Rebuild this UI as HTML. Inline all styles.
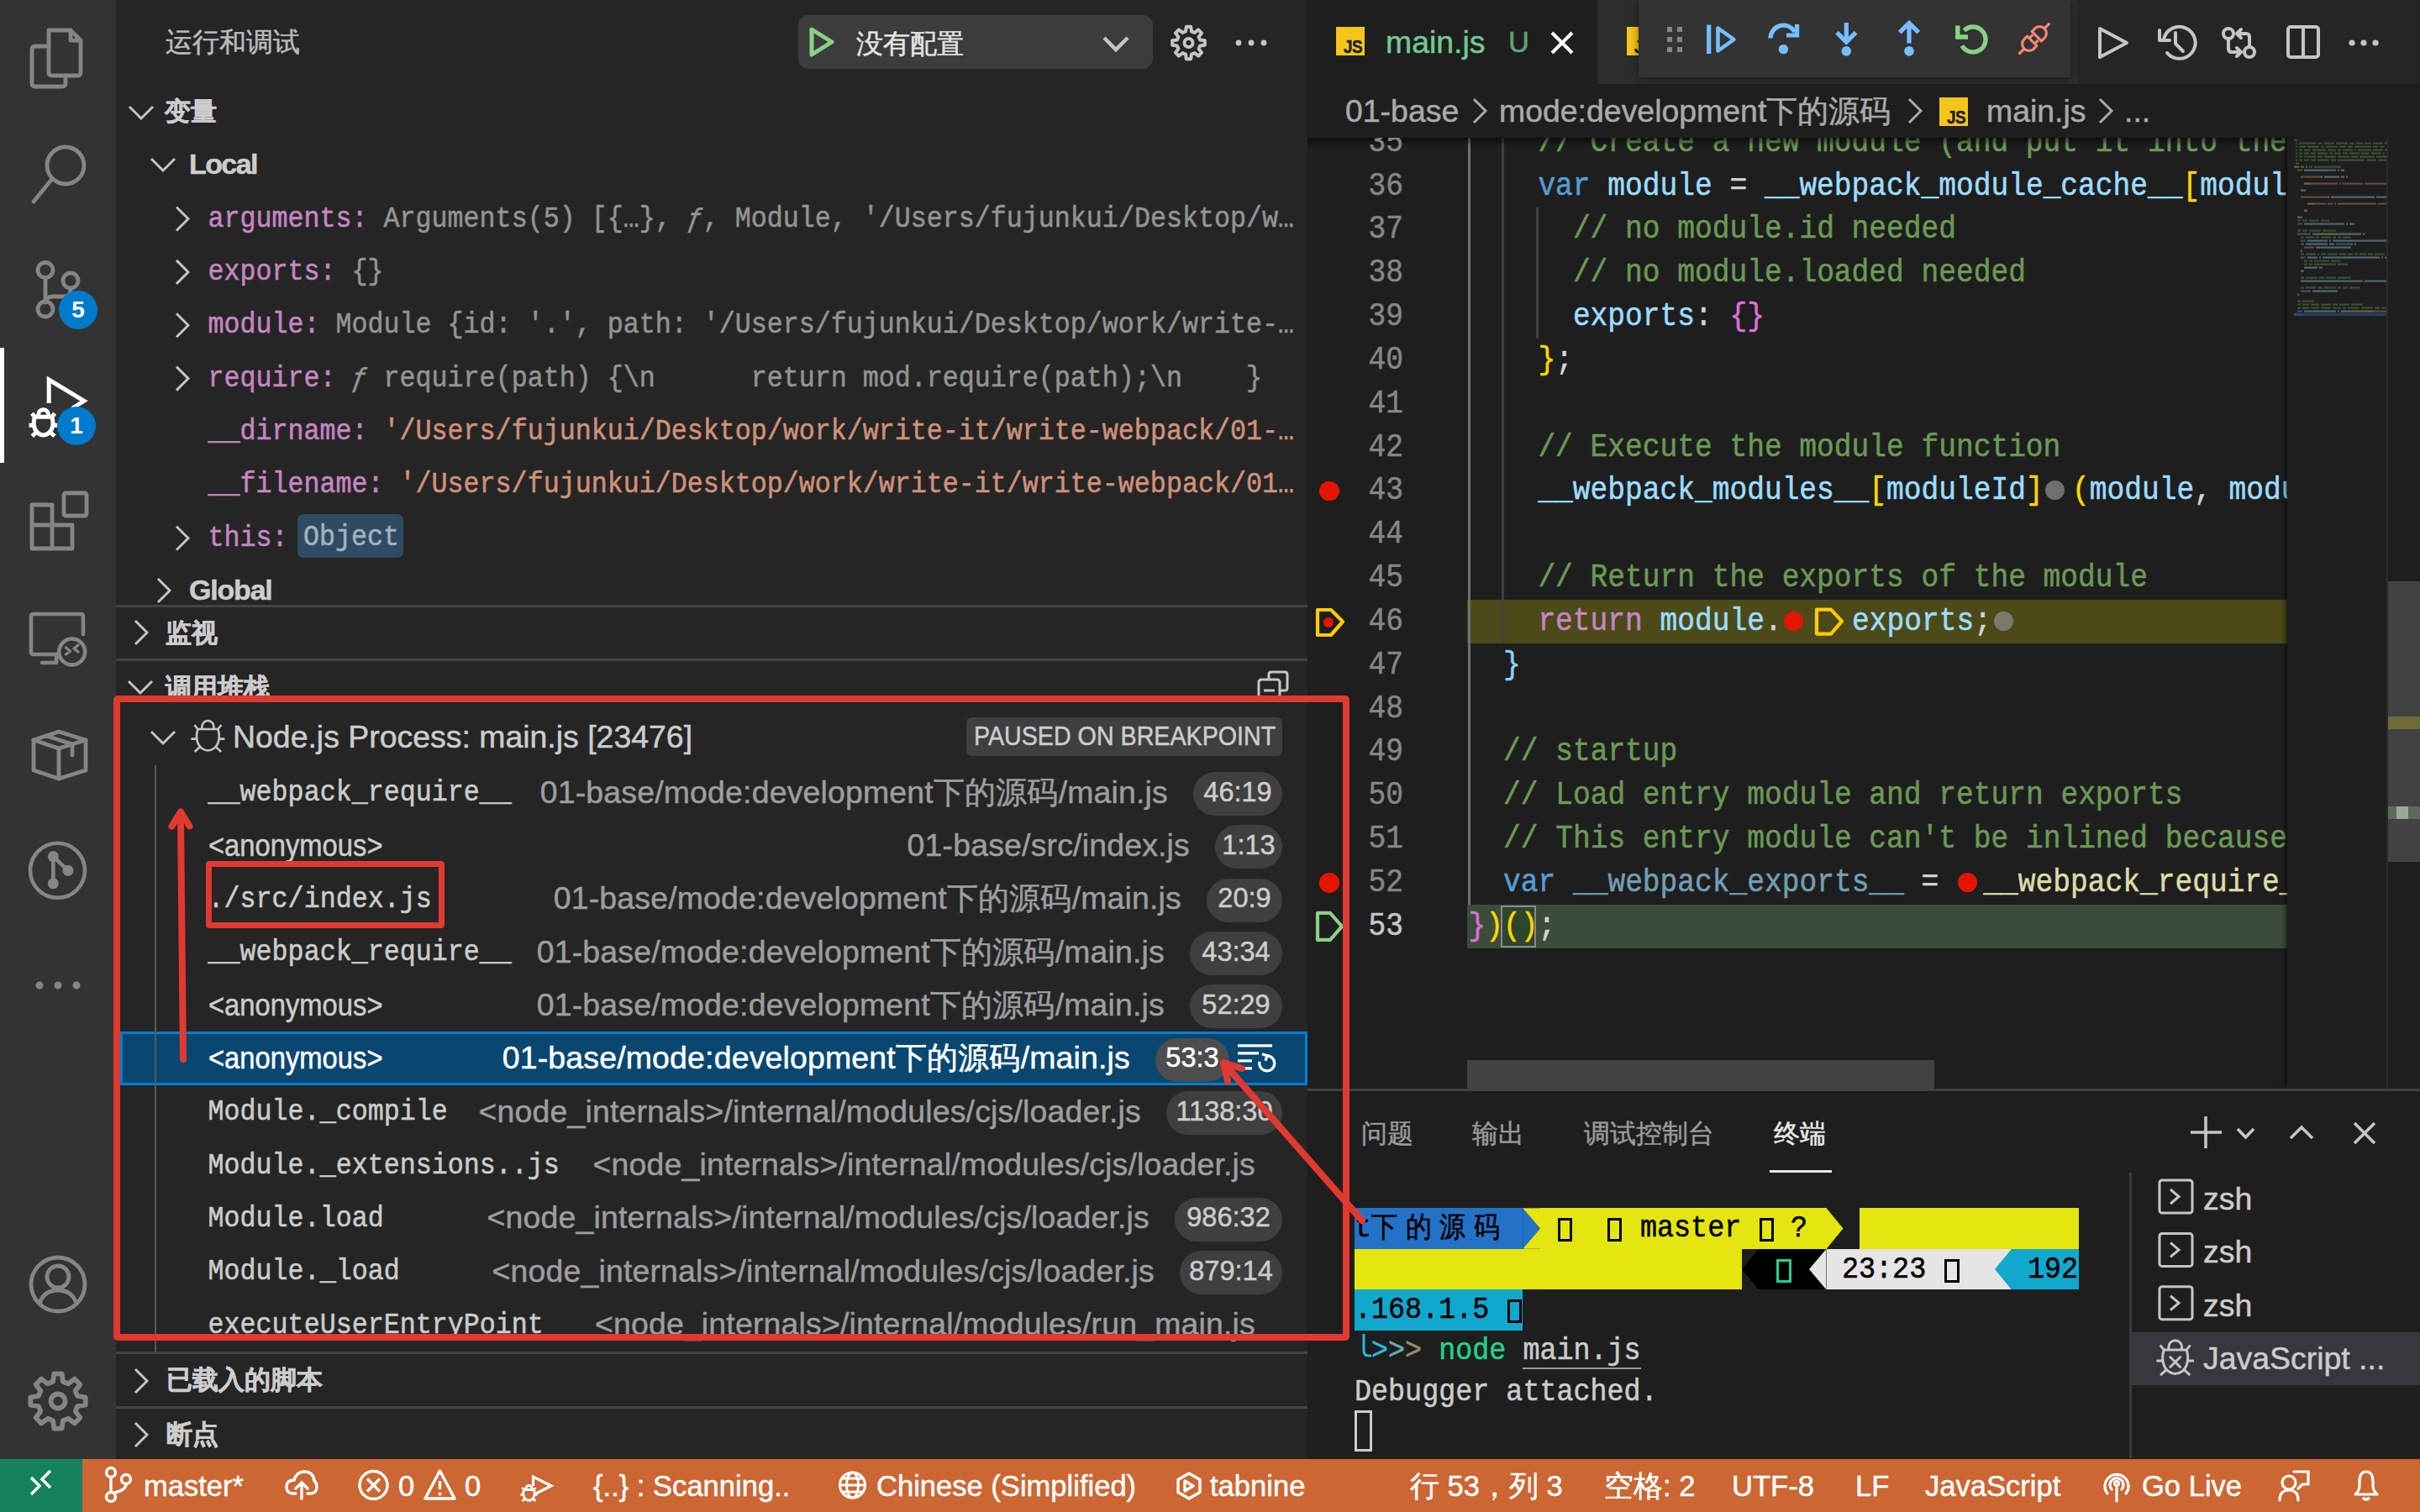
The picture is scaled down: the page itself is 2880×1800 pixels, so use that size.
<!DOCTYPE html><html><head><meta charset="utf-8"><title>VS Code</title><style>
*{box-sizing:border-box;margin:0;padding:0}
html,body{width:2880px;height:1800px;overflow:hidden;background:#1e1e1e}
body{position:relative;font-family:"Liberation Sans",sans-serif;color:#cccccc}
.t{-webkit-text-stroke:0.5px currentColor}
.mono{transform:scaleY(1.1)}
.a{position:absolute}
.t{position:absolute;white-space:pre}
.mono{font-family:"Liberation Mono",monospace}
svg{position:absolute;overflow:visible}
.ic{fill:none;stroke-linecap:round;stroke-linejoin:round}
</style></head><body>
<div class="a" style="left:0;top:0;width:138px;height:1737px;background:#333333"></div>
<div class="a" style="left:0;top:414px;width:5px;height:137px;background:#ffffff"></div>
<svg style="left:0;top:0" width="138" height="138"><g class="ic" stroke="#858585" stroke-width="4.8"><path d="M58 36 H84 L96 48 V86 Q96 90 92 90 H62 Q58 90 58 86 Z"/><path d="M84 36 V48 H96"/><path d="M58 55 H42 Q38 55 38 59 V99 Q38 103 42 103 H74 Q78 103 78 99 V90"/></g></svg>
<svg style="left:0;top:138" width="138" height="138"><g class="ic" stroke="#858585" stroke-width="4.8"><circle cx="78" cy="59" r="22"/><path d="M62 75 L40 102"/></g></svg>
<svg style="left:0;top:276" width="138" height="138"><g class="ic" stroke="#858585" stroke-width="4.8"><circle cx="54" cy="45.5" r="9"/><circle cx="84" cy="58" r="9"/><circle cx="54" cy="92" r="9"/><path d="M54 54.5 V83"/><path d="M84 67 V69 Q84 77 76 77 H63 Q55 77 54 84"/></g></svg>
<div class="a" style="left:70px;top:346px;width:46px;height:46px;border-radius:50%;background:#007acc;color:#fff;font:bold 28px/46px 'Liberation Sans';text-align:center">5</div>
<svg style="left:0;top:0" width="1" height="1"><path d="M58.2 480 V452 L100 477.3 L86 486" fill="none" stroke="#ffffff" stroke-width="5" stroke-linejoin="miter"/></svg>
<svg style="left:0;top:0" width="1" height="1"><path transform="translate(51.6 504) scale(0.85)" d="M-7 -9 V-12 A7 7 0 0 1 7 -12 V-9 M-12 -9 H12 M-12 -9 C-15 0 -13 10 -7 14 Q0 19 7 14 C13 10 15 0 12 -9 M-16 -14 L-12 -9 M16 -14 L12 -9 M-20 2.6 H-13.5 M20 2.6 H13.5 M-15.7 18 L-10 12.6 M15.7 18 L10 12.6" fill="none" stroke="#ffffff" stroke-width="5.88" stroke-linecap="butt" stroke-linejoin="round"/></svg>
<div class="a" style="left:68px;top:484px;width:46px;height:46px;border-radius:50%;background:#007acc;color:#fff;font:bold 28px/46px 'Liberation Sans';text-align:center">1</div>
<svg style="left:0;top:553" width="138" height="138"><g class="ic" stroke="#858585" stroke-width="4.8"><path d="M38 48 H62 V72 H86 V100 H38 Z"/><path d="M38 72 H62 V100"/><rect x="76" y="34" width="27" height="27" rx="2"/></g></svg>
<svg style="left:0;top:691" width="138" height="138"><g class="ic" stroke="#858585" stroke-width="4.6"><path d="M68 88 H40 Q37 88 37 85 V43 Q37 40 40 40 H96 Q99 40 99 43 V64"/><path d="M50 98 H67 V89"/><circle cx="85.7" cy="85" r="15.5"/><path d="M78.5 80 L83.5 84 L78.5 88 M93 77 L88 81 L93 85" stroke-width="3.4"/></g></svg>
<svg style="left:0;top:829" width="138" height="138"><g class="ic" stroke="#858585" stroke-width="4.8"><path d="M40 52 L70 42 L102 52 V88 L70 98 L40 88 Z"/><path d="M40 52 L70 62 L102 52"/><path d="M70 62 V98"/><path d="M55 47 L86 57 V70"/></g></svg>
<svg style="left:0;top:968" width="138" height="138"><circle cx="68.5" cy="68.3" r="32.5" fill="none" stroke="#858585" stroke-width="4.6"/><g fill="#858585"><circle cx="63.3" cy="51.6" r="6.5"/><circle cx="81" cy="68.3" r="6.5"/><circle cx="63.3" cy="83.8" r="6.5"/></g><path d="M63.3 51.6 V83.8 M63.3 51.6 L81 68.3" stroke="#858585" stroke-width="4.6" fill="none"/></svg>
<svg style="left:0;top:1106" width="138" height="138"><g fill="#858585"><circle cx="47" cy="67" r="4.5"/><circle cx="69" cy="67" r="4.5"/><circle cx="91" cy="67" r="4.5"/></g></svg>
<svg style="left:0;top:1460" width="138" height="138"><g class="ic" stroke="#858585" stroke-width="4.8"><circle cx="69" cy="69" r="32"/><circle cx="69" cy="60" r="13"/><path d="M47 92 Q52 76 69 76 Q86 76 91 92"/></g></svg>
<svg style="left:0;top:0" width="138" height="1800"><path d="M101.7 1663.4 L101.7 1672.6 L92.2 1674.0 L89.7 1680.2 L95.4 1687.8 L88.8 1694.4 L81.2 1688.7 L75.0 1691.2 L73.6 1700.7 L64.4 1700.7 L63.0 1691.2 L56.8 1688.7 L49.2 1694.4 L42.6 1687.8 L48.3 1680.2 L45.8 1674.0 L36.3 1672.6 L36.3 1663.4 L45.8 1662.0 L48.3 1655.8 L42.6 1648.2 L49.2 1641.6 L56.8 1647.3 L63.0 1644.8 L64.4 1635.3 L73.6 1635.3 L75.0 1644.8 L81.2 1647.3 L88.8 1641.6 L95.4 1648.2 L89.7 1655.8 L92.2 1662.0 Z" stroke="#858585" stroke-width="5.8" fill="none" stroke-linejoin="round"/><circle cx="69" cy="1668" r="8.5" stroke="#858585" stroke-width="5.8" fill="none"/></svg>
<div class="a" style="left:138px;top:0;width:1418px;height:1737px;background:#252526"></div>
<div class="t" style="left:197px;top:20px;height:60px;font-size:31.68px;line-height:60px;color:#bbbbbb">运行和调试</div>
<div class="a" style="left:950px;top:18px;width:422px;height:64px;border-radius:12px;background:#3c3c3c"></div>
<svg style="left:0;top:0" width="1" height="1"><path d="M966 35 L990 50 L966 65 Z" fill="none" stroke="#89d185" stroke-width="5" stroke-linejoin="round"/></svg>
<div class="t" style="left:1019px;top:20px;height:64px;font-size:31.5px;line-height:64px;color:#e4e4e4">没有配置</div>
<svg style="left:0;top:0" width="1" height="1"><path d="M1314 45 L1328 59 L1342 45" fill="none" stroke="#c5c5c5" stroke-width="4.5"/></svg>
<svg style="left:0;top:0" width="1" height="1"><path d="M1433.8 48.3 L1433.8 53.7 L1428.1 54.5 L1426.6 58.1 L1430.1 62.7 L1426.2 66.6 L1421.6 63.1 L1418.0 64.6 L1417.2 70.3 L1411.8 70.3 L1411.0 64.6 L1407.4 63.1 L1402.8 66.6 L1398.9 62.7 L1402.4 58.1 L1400.9 54.5 L1395.2 53.7 L1395.2 48.3 L1400.9 47.5 L1402.4 43.9 L1398.9 39.3 L1402.8 35.4 L1407.4 38.9 L1411.0 37.4 L1411.8 31.7 L1417.2 31.7 L1418.0 37.4 L1421.6 38.9 L1426.2 35.4 L1430.1 39.3 L1426.6 43.9 L1428.1 47.5 Z" stroke="#c5c5c5" stroke-width="4" fill="none" stroke-linejoin="round"/><circle cx="1414.5" cy="51" r="5" stroke="#c5c5c5" stroke-width="4" fill="none"/></svg>
<svg style="left:0;top:0" width="1" height="1"><g fill="#c5c5c5"><circle cx="1474" cy="51" r="3.4"/><circle cx="1489" cy="51" r="3.4"/><circle cx="1504" cy="51" r="3.4"/></g></svg>
<svg style="left:0;top:0" width="1" height="1"><path d="M154 127 L168 141 L182 127" fill="none" stroke="#c5c5c5" stroke-width="2.9"/></svg>
<div class="t" style="left:196px;top:101px;height:63px;font-weight:bold;font-size:30.5px;line-height:63px;color:#cccccc">变量</div>
<svg style="left:0;top:0" width="1" height="1"><path d="M180 189 L194 203 L208 189" fill="none" stroke="#c5c5c5" stroke-width="2.9"/></svg>
<div class="t" style="left:225px;top:164px;height:63px;font-weight:bold;font-size:34px;line-height:63px;letter-spacing:-1.6px;color:#cccccc">Local</div>
<svg style="left:0;top:0" width="1" height="1"><path d="M210 246.52 L224 260.52 L210 274.52" fill="none" stroke="#c5c5c5" stroke-width="2.9"/></svg>
<div class="t mono" style="left:247.5px;top:229.5px;height:63px;font-size:31.68px;line-height:63px;color:#c586c0">arguments: <span style="color:#939393">Arguments(5) [{…}, </span><span style="color:#939393;font-style:italic">ƒ</span><span style="color:#939393">, Module, '/Users/fujunkui/Desktop/w…</span></div>
<svg style="left:0;top:0" width="1" height="1"><path d="M210 309.88 L224 323.88 L210 337.88" fill="none" stroke="#c5c5c5" stroke-width="2.9"/></svg>
<div class="t mono" style="left:247.5px;top:292.9px;height:63px;font-size:31.68px;line-height:63px;color:#c586c0">exports: <span style="color:#939393">{}</span></div>
<svg style="left:0;top:0" width="1" height="1"><path d="M210 373.24 L224 387.24 L210 401.24" fill="none" stroke="#c5c5c5" stroke-width="2.9"/></svg>
<div class="t mono" style="left:247.5px;top:356.2px;height:63px;font-size:31.68px;line-height:63px;color:#c586c0">module: <span style="color:#939393">Module {id: '.', path: '/Users/fujunkui/Desktop/work/write-…</span></div>
<svg style="left:0;top:0" width="1" height="1"><path d="M210 436.6 L224 450.6 L210 464.6" fill="none" stroke="#c5c5c5" stroke-width="2.9"/></svg>
<div class="t mono" style="left:247.5px;top:419.6px;height:63px;font-size:31.68px;line-height:63px;color:#c586c0">require: <span style="color:#939393;font-style:italic">ƒ</span><span style="color:#939393"> require(path) {\n      return mod.require(path);\n    }</span></div>
<div class="t mono" style="left:247.5px;top:483.0px;height:63px;font-size:31.68px;line-height:63px;color:#c586c0">__dirname: <span style="color:#ce9178">'/Users/fujunkui/Desktop/work/write-it/write-webpack/01-…</span></div>
<div class="t mono" style="left:247.5px;top:546.3px;height:63px;font-size:31.68px;line-height:63px;color:#c586c0">__filename: <span style="color:#ce9178">'/Users/fujunkui/Desktop/work/write-it/write-webpack/01…</span></div>
<svg style="left:0;top:0" width="1" height="1"><path d="M210 626.6800000000001 L224 640.6800000000001 L210 654.6800000000001" fill="none" stroke="#c5c5c5" stroke-width="2.9"/></svg>
<div class="t mono" style="left:247.5px;top:609.7px;height:63px;font-size:31.68px;line-height:63px;color:#c586c0">this: </div>
<div class="a" style="left:354px;top:612px;width:126px;height:52px;border-radius:7px;background:#2f4b62"></div>
<div class="t mono" style="left:361px;top:609px;height:63px;font-size:31.68px;line-height:63px;color:#a3b2c0">Object</div>
<div class="a" style="left:138px;top:671px;width:1418px;height:50px;overflow:hidden">
<svg style="left:0;top:0" width="1" height="1"><path d="M50 18 L64 32 L50 46" fill="none" stroke="#c5c5c5" stroke-width="2.9"/></svg>
<div class="t" style="left:87px;top:0;height:63px;font-weight:bold;font-size:34px;line-height:63px;letter-spacing:-1.2px;color:#cccccc">Global</div>
</div>
<div class="a" style="left:138px;top:720px;width:1418px;height:3px;background:#434344"></div>
<svg style="left:0;top:0" width="1" height="1"><path d="M161 739 L175 753 L161 767" fill="none" stroke="#c5c5c5" stroke-width="2.9"/></svg>
<div class="t" style="left:197px;top:722px;height:63px;font-weight:bold;font-size:30.5px;line-height:63px;color:#cccccc">监视</div>
<div class="a" style="left:138px;top:784px;width:1418px;height:3px;background:#434344"></div>
<div class="a" style="left:138px;top:787px;width:1418px;height:41px;overflow:hidden">
<svg style="left:0;top:0" width="1" height="1"><path d="M15 24 L29 38 L43 24" fill="none" stroke="#c5c5c5" stroke-width="2.9"/></svg>
<div class="t" style="left:59px;top:0;height:63px;font-weight:bold;font-size:30.5px;line-height:63px;color:#cccccc">调用堆栈</div>
<svg style="left:0;top:0" width="1" height="1"><g fill="none" stroke="#c5c5c5" stroke-width="3"><path d="M1372 22 V16 Q1372 13 1375 13 H1391 Q1394 13 1394 16 V32 Q1394 35 1391 35 H1385"/><rect x="1360" y="22" width="25" height="25" rx="3"/><path d="M1366 35 H1379"/></g></svg>
</div>
<svg style="left:0;top:0" width="1" height="1"><path d="M180 871 L194 885 L208 871" fill="none" stroke="#c5c5c5" stroke-width="2.9"/></svg>
<svg style="left:0;top:0" width="1" height="1"><path transform="translate(247.4 877) scale(1.0)" d="M-7 -9 V-12 A7 7 0 0 1 7 -12 V-9 M-12 -9 H12 M-12 -9 C-15 0 -13 10 -7 14 Q0 19 7 14 C13 10 15 0 12 -9 M-16 -14 L-12 -9 M16 -14 L12 -9 M-20 2.6 H-13.5 M20 2.6 H13.5 M-15.7 18 L-10 12.6 M15.7 18 L10 12.6" fill="none" stroke="#c5c5c5" stroke-width="2.60" stroke-linecap="butt" stroke-linejoin="round"/></svg>
<div class="t" style="left:277px;top:846px;height:63px;font-size:37.44px;line-height:63px;color:#cccccc">Node.js Process: main.js [23476]</div>
<div class="a" style="left:1150px;top:854px;width:376px;height:46px;border-radius:6px;background:#3f3f3f"></div>
<div class="t" style="left:1159px;top:854px;height:46px;font-size:30.8px;line-height:46px;color:#cccccc;transform:scaleX(0.93);transform-origin:0 0">PAUSED ON BREAKPOINT</div>
<div class="a" style="left:138px;top:911px;width:1418px;height:699px;overflow:hidden">
<div class="t mono" style="left:109.6px;top:2.0px;height:63px;font-size:31.68px;line-height:63px;color:#cccccc">__webpack_require__</div>
<div class="a" style="left:1282px;top:8.0px;width:106px;height:52px;border-radius:26px;background:#3f3f3f"></div>
<div class="t" style="left:1282px;top:0.5px;width:106px;height:63px;font-size:32.5px;line-height:63px;text-align:center;color:#cccccc">46:19</div>
<div class="t" style="right:166px;top:0.5px;height:63px;font-size:37.44px;line-height:63px;letter-spacing:0.18px;color:#9d9d9d">01-base/mode:development下的源码/main.js</div>
<div class="t" style="left:109.6px;top:63.9px;height:63px;font-size:37.44px;line-height:63px;color:#cccccc;transform:scaleX(0.875);transform-origin:0 0">&lt;anonymous&gt;</div>
<div class="a" style="left:1308px;top:71.4px;width:80px;height:52px;border-radius:26px;background:#3f3f3f"></div>
<div class="t" style="left:1308px;top:63.9px;width:80px;height:63px;font-size:32.5px;line-height:63px;text-align:center;color:#cccccc">1:13</div>
<div class="t" style="right:140px;top:63.9px;height:63px;font-size:37.44px;line-height:63px;letter-spacing:0.18px;color:#9d9d9d">01-base/src/index.js</div>
<div class="t mono" style="left:109.6px;top:128.7px;height:63px;font-size:31.68px;line-height:63px;color:#cccccc">./src/index.js</div>
<div class="a" style="left:1298px;top:134.7px;width:90px;height:52px;border-radius:26px;background:#3f3f3f"></div>
<div class="t" style="left:1298px;top:127.2px;width:90px;height:63px;font-size:32.5px;line-height:63px;text-align:center;color:#cccccc">20:9</div>
<div class="t" style="right:150px;top:127.2px;height:63px;font-size:37.44px;line-height:63px;letter-spacing:0.18px;color:#9d9d9d">01-base/mode:development下的源码/main.js</div>
<div class="t mono" style="left:109.6px;top:192.1px;height:63px;font-size:31.68px;line-height:63px;color:#cccccc">__webpack_require__</div>
<div class="a" style="left:1278px;top:198.1px;width:110px;height:52px;border-radius:26px;background:#3f3f3f"></div>
<div class="t" style="left:1278px;top:190.6px;width:110px;height:63px;font-size:32.5px;line-height:63px;text-align:center;color:#cccccc">43:34</div>
<div class="t" style="right:170px;top:190.6px;height:63px;font-size:37.44px;line-height:63px;letter-spacing:0.18px;color:#9d9d9d">01-base/mode:development下的源码/main.js</div>
<div class="t" style="left:109.6px;top:253.9px;height:63px;font-size:37.44px;line-height:63px;color:#cccccc;transform:scaleX(0.875);transform-origin:0 0">&lt;anonymous&gt;</div>
<div class="a" style="left:1278px;top:261.4px;width:110px;height:52px;border-radius:26px;background:#3f3f3f"></div>
<div class="t" style="left:1278px;top:253.9px;width:110px;height:63px;font-size:32.5px;line-height:63px;text-align:center;color:#cccccc">52:29</div>
<div class="t" style="right:170px;top:253.9px;height:63px;font-size:37.44px;line-height:63px;letter-spacing:0.18px;color:#9d9d9d">01-base/mode:development下的源码/main.js</div>
<div class="a" style="left:5px;top:316.8px;width:1413px;height:64px;background:#094771;border:3px solid #007fd4"></div>
<div class="t" style="left:109.6px;top:317.3px;height:63px;font-size:37.44px;line-height:63px;color:#ffffff;transform:scaleX(0.875);transform-origin:0 0">&lt;anonymous&gt;</div>
<div class="a" style="left:1237px;top:324.8px;width:88px;height:52px;border-radius:26px;background:#4d4d4d"></div>
<div class="t" style="left:1237px;top:317.3px;width:88px;height:63px;font-size:32.5px;line-height:63px;text-align:center;color:#ffffff">53:3</div>
<div class="t" style="right:211px;top:317.3px;height:63px;font-size:37.44px;line-height:63px;letter-spacing:0.18px;color:#ffffff">01-base/mode:development下的源码/main.js</div>
<svg style="left:0;top:0" width="1" height="1"><g fill="none" stroke="#ffffff" stroke-width="3.2"><path d="M1335 333.8 H1376 M1335 342.8 H1360 M1335 351.8 H1352 M1335 360.8 H1352"/><path d="M1361 352.8 A9 9 0 1 0 1370 345.8"/><path d="M1364 343.8 L1370 345.8 L1368 351.8"/></g></svg>
<div class="t mono" style="left:109.6px;top:382.2px;height:63px;font-size:31.68px;line-height:63px;color:#cccccc">Module._compile</div>
<div class="a" style="left:1250px;top:388.2px;width:138px;height:52px;border-radius:26px;background:#3f3f3f"></div>
<div class="t" style="left:1250px;top:380.7px;width:138px;height:63px;font-size:32.5px;line-height:63px;text-align:center;color:#cccccc">1138:30</div>
<div class="t" style="right:198px;top:380.7px;height:63px;font-size:37.44px;line-height:63px;letter-spacing:0.18px;color:#9d9d9d">&lt;node_internals&gt;/internal/modules/cjs/loader.js</div>
<div class="t mono" style="left:109.6px;top:445.5px;height:63px;font-size:31.68px;line-height:63px;color:#cccccc">Module._extensions..js</div>
<div class="t" style="right:62px;top:444.0px;height:63px;font-size:37.44px;line-height:63px;letter-spacing:0.18px;color:#9d9d9d">&lt;node_internals&gt;/internal/modules/cjs/loader.js</div>
<div class="t mono" style="left:109.6px;top:508.9px;height:63px;font-size:31.68px;line-height:63px;color:#cccccc">Module.load</div>
<div class="a" style="left:1260px;top:514.9px;width:128px;height:52px;border-radius:26px;background:#3f3f3f"></div>
<div class="t" style="left:1260px;top:507.4px;width:128px;height:63px;font-size:32.5px;line-height:63px;text-align:center;color:#cccccc">986:32</div>
<div class="t" style="right:188px;top:507.4px;height:63px;font-size:37.44px;line-height:63px;letter-spacing:0.18px;color:#9d9d9d">&lt;node_internals&gt;/internal/modules/cjs/loader.js</div>
<div class="t mono" style="left:109.6px;top:572.2px;height:63px;font-size:31.68px;line-height:63px;color:#cccccc">Module._load</div>
<div class="a" style="left:1266px;top:578.2px;width:122px;height:52px;border-radius:26px;background:#3f3f3f"></div>
<div class="t" style="left:1266px;top:570.7px;width:122px;height:63px;font-size:32.5px;line-height:63px;text-align:center;color:#cccccc">879:14</div>
<div class="t" style="right:182px;top:570.7px;height:63px;font-size:37.44px;line-height:63px;letter-spacing:0.18px;color:#9d9d9d">&lt;node_internals&gt;/internal/modules/cjs/loader.js</div>
<div class="t mono" style="left:109.6px;top:635.6px;height:63px;font-size:31.68px;line-height:63px;color:#cccccc">executeUserEntryPoint</div>
<div class="t" style="right:62px;top:634.1px;height:63px;font-size:37.44px;line-height:63px;letter-spacing:0.18px;color:#9d9d9d">&lt;node_internals&gt;/internal/modules/run_main.js</div>
<div class="a" style="left:46px;top:0;width:2px;height:699px;background:#585858"></div>
</div>
<div class="a" style="left:138px;top:1609px;width:1418px;height:3px;background:#434344"></div>
<svg style="left:0;top:0" width="1" height="1"><path d="M161 1630 L175 1644 L161 1658" fill="none" stroke="#c5c5c5" stroke-width="2.9"/></svg>
<div class="t" style="left:198px;top:1611px;height:63px;font-weight:bold;font-size:30.5px;line-height:63px;color:#cccccc">已载入的脚本</div>
<div class="a" style="left:138px;top:1674px;width:1418px;height:3px;background:#434344"></div>
<svg style="left:0;top:0" width="1" height="1"><path d="M161 1694 L175 1708 L161 1722" fill="none" stroke="#c5c5c5" stroke-width="2.9"/></svg>
<div class="t" style="left:198px;top:1676px;height:61px;font-weight:bold;font-size:30.5px;line-height:63px;color:#cccccc">断点</div>
<div class="a" style="left:1556px;top:0;width:1324px;height:100px;background:#252526"></div>
<div class="a" style="left:1556px;top:0;width:344px;height:100px;background:#1e1e1e"></div>
<div class="a" style="left:1902px;top:0;width:570px;height:100px;background:#2d2d2d"></div>
<div class="a" style="left:1590px;top:32px;width:34px;height:34px;background:#f5c61a"></div><div class="t" style="left:1598.5px;top:39px;height:34px;font-weight:bold;font-size:22.5px;line-height:34px;color:#1e1e1e;letter-spacing:-0.6px;transform:scaleX(0.84);transform-origin:0 0">JS</div>
<div class="t" style="left:1649px;top:18px;height:64px;font-size:37.44px;line-height:64px;color:#73c991">main.js</div>
<div class="t" style="left:1795px;top:18px;height:64px;font-size:34.56px;line-height:64px;color:#5fa578">U</div>
<svg style="left:0;top:0" width="1" height="1"><path d="M1847 39 L1871 63 M1871 39 L1847 63" stroke="#ffffff" stroke-width="4"/></svg>
<div class="a" style="left:1936px;top:32px;width:34px;height:34px;background:#f5c61a"></div><div class="t" style="left:1944.5px;top:39px;height:34px;font-weight:bold;font-size:22.5px;line-height:34px;color:#1e1e1e;letter-spacing:-0.6px;transform:scaleX(0.84);transform-origin:0 0">JS</div>
<svg style="left:0;top:0" width="1" height="1"><g fill="none" stroke="#c5c5c5" stroke-width="4" stroke-linejoin="round" stroke-linecap="round"><path d="M2499 34 L2531 51 L2499 68 Z"/><path d="M2575 47 A19 19 0 1 1 2579 63"/><path d="M2570 36 V48 H2582"/><path d="M2589 39 V52 L2598 61"/><circle cx="2652" cy="40" r="6"/><circle cx="2677" cy="62" r="6"/><path d="M2652 46 V58 Q2652 62 2656 62 H2667 M2662 57 L2667 62 L2662 67"/><path d="M2677 56 V44 Q2677 40 2673 40 H2662 M2667 35 L2662 40 L2667 45"/><rect x="2723" y="32" width="36" height="36" rx="3"/><path d="M2741 32 V68"/></g><g fill="#c5c5c5"><circle cx="2799" cy="51" r="3.6"/><circle cx="2813" cy="51" r="3.6"/><circle cx="2827" cy="51" r="3.6"/></g></svg>
<div class="a" style="left:1556px;top:100px;width:1324px;height:64px;background:#1e1e1e"></div>
<div class="t" style="left:1601px;top:100px;height:64px;font-size:37.44px;line-height:64px;color:#a9a9a9">01-base</div>
<svg style="left:0;top:0" width="1" height="1"><path d="M1754 118 L1768 132 L1754 146" fill="none" stroke="#a9a9a9" stroke-width="3"/></svg>
<div class="t" style="left:1784px;top:100px;height:64px;font-size:37.44px;line-height:64px;color:#a9a9a9">mode:development下的源码</div>
<svg style="left:0;top:0" width="1" height="1"><path d="M2272 118 L2286 132 L2272 146" fill="none" stroke="#a9a9a9" stroke-width="3"/></svg>
<div class="a" style="left:2308px;top:116px;width:34px;height:34px;background:#f5c61a"></div><div class="t" style="left:2316.5px;top:123px;height:34px;font-weight:bold;font-size:22.5px;line-height:34px;color:#1e1e1e;letter-spacing:-0.6px;transform:scaleX(0.84);transform-origin:0 0">JS</div>
<div class="t" style="left:2364px;top:100px;height:64px;font-size:37.44px;line-height:64px;color:#a9a9a9">main.js</div>
<svg style="left:0;top:0" width="1" height="1"><path d="M2499 118 L2513 132 L2499 146" fill="none" stroke="#a9a9a9" stroke-width="3"/></svg>
<div class="t" style="left:2528px;top:100px;height:64px;font-size:37.44px;line-height:64px;color:#a9a9a9">...</div>
<div class="a" style="left:1950px;top:0;width:514px;height:92px;background:#333333;box-shadow:0 2px 10px rgba(0,0,0,0.45)"></div>
<svg style="left:0;top:0" width="1" height="1"><g fill="#858585"><rect x="1984" y="32" width="6" height="6"/><rect x="1996" y="32" width="6" height="6"/><rect x="1984" y="44" width="6" height="6"/><rect x="1996" y="44" width="6" height="6"/><rect x="1984" y="56" width="6" height="6"/><rect x="1996" y="56" width="6" height="6"/></g><g fill="none" stroke="#75beff" stroke-width="5.2" stroke-linejoin="miter"><path d="M2033.7 29.5 V64"/><path d="M2044.5 33.5 L2063.5 47 L2044.5 60.5 Z" stroke-width="4.6" stroke-linejoin="round"/><path d="M2107 45.5 A15.5 15.5 0 0 1 2136 38"/><path d="M2138.6 29 V42 H2126"/><path d="M2197.3 27 V49 M2186 38.7 L2197.3 50 L2208.6 38.7"/><path d="M2272 51.5 V29 M2260.7 38.7 L2272 27.4 L2283.3 38.7"/></g><g fill="#75beff"><circle cx="2122.4" cy="58.6" r="5.7"/><circle cx="2197.3" cy="60.9" r="5.8"/><circle cx="2272" cy="60.9" r="5.8"/></g><g fill="none" stroke="#89d185" stroke-width="5.4"><path d="M2337.4 36.4 A15 15 0 1 1 2335 54.5"/><path d="M2329.8 30.5 V44 H2342"/></g><g fill="none" stroke="#f48771" stroke-width="3.2" stroke-linejoin="round" transform="translate(2421 46) rotate(-45)"><path d="M16 0 H26"/><path d="M4 -8 H9 A8 8 0 0 1 9 8 H4 Z"/><path d="M-4 -8 H-9 A8 8 0 0 0 -9 8 H-4 Z"/><path d="M-4 -4.5 H2 M-4 4.5 H2"/><path d="M-18 0 H-26"/></g></svg>
<div class="a" style="left:1556px;top:164.4px;width:1166px;height:1132.6px;overflow:hidden;background:#1e1e1e">
<div class="a" style="left:190px;top:549.6px;width:976px;height:51.84px;background:#4b4a18"></div>
<div class="a" style="left:190px;top:912.5px;width:976px;height:51.84px;background:#3b4d3a"></div>
<div class="a" style="left:191px;top:0;width:3px;height:912.5px;background:#707070"></div>
<div class="a" style="left:231px;top:0;width:3px;height:601.4px;background:#404040"></div>
<div class="a" style="left:272px;top:83.0px;width:3px;height:155.5px;background:#404040"></div>
<div class="a" style="left:230px;top:913.5px;width:42px;height:50px;border:2px solid #8a8a8a;background:#2e452e"></div>
<div class="t mono" style="left:274.4px;top:-20.6px;height:51.84px;font-size:34.56px;line-height:51.84px"><span style="color:#6a9955">// Create a new module (and put it into the cache)</span></div>
<div class="t mono" style="left:274.4px;top:31.2px;height:51.84px;font-size:34.56px;line-height:51.84px"><span style="color:#569cd6">var</span><span style="color:#d4d4d4"> </span><span style="color:#9cdcfe">module</span><span style="color:#d4d4d4"> = </span><span style="color:#9cdcfe">__webpack_module_cache__</span><span style="color:#ffd700">[</span><span style="color:#9cdcfe">moduleId</span><span style="color:#ffd700">]</span><span style="color:#d4d4d4"> = </span><span style="color:#ffd700">{</span></div>
<div class="t mono" style="left:315.9px;top:83.0px;height:51.84px;font-size:34.56px;line-height:51.84px"><span style="color:#6a9955">// no module.id needed</span></div>
<div class="t mono" style="left:315.9px;top:134.9px;height:51.84px;font-size:34.56px;line-height:51.84px"><span style="color:#6a9955">// no module.loaded needed</span></div>
<div class="t mono" style="left:315.9px;top:186.7px;height:51.84px;font-size:34.56px;line-height:51.84px"><span style="color:#9cdcfe">exports</span><span style="color:#d4d4d4">: </span><span style="color:#da70d6">{}</span></div>
<div class="t mono" style="left:274.4px;top:238.6px;height:51.84px;font-size:34.56px;line-height:51.84px"><span style="color:#ffd700">}</span><span style="color:#d4d4d4">;</span></div>
<div class="t mono" style="left:274.4px;top:342.2px;height:51.84px;font-size:34.56px;line-height:51.84px"><span style="color:#6a9955">// Execute the module function</span></div>
<div class="t mono" style="left:274.4px;top:497.8px;height:51.84px;font-size:34.56px;line-height:51.84px"><span style="color:#6a9955">// Return the exports of the module</span></div>
<div class="t mono" style="left:233.0px;top:601.4px;height:51.84px;font-size:34.56px;line-height:51.84px"><span style="color:#87cefa">}</span></div>
<div class="t mono" style="left:233.0px;top:705.1px;height:51.84px;font-size:34.56px;line-height:51.84px"><span style="color:#6a9955">// startup</span></div>
<div class="t mono" style="left:233.0px;top:757.0px;height:51.84px;font-size:34.56px;line-height:51.84px"><span style="color:#6a9955">// Load entry module and return exports</span></div>
<div class="t mono" style="left:233.0px;top:808.8px;height:51.84px;font-size:34.56px;line-height:51.84px"><span style="color:#6a9955">// This entry module can't be inlined because the eval devtool is used.</span></div>
<div class="t mono" style="left:191.5px;top:912.5px;height:51.84px;font-size:34.56px;line-height:51.84px"><span style="color:#da70d6">}</span><span style="color:#ffd700">)</span><span style="color:#ffd700">()</span><span style="color:#d4d4d4">;</span></div>
<div class="t mono" style="left:274.4px;top:394.1px;height:51.84px;font-size:34.56px;line-height:51.84px"><span style="color:#9cdcfe">__webpack_modules__</span><span style="color:#ffd700">[</span><span style="color:#9cdcfe">moduleId</span><span style="color:#ffd700">]</span></div>
<div class="a" style="left:878px;top:408.1px;width:23px;height:23px;border-radius:50%;background:#6f6f6f"></div>
<div class="t mono" style="left:910.0px;top:394.1px;height:51.84px;font-size:34.56px;line-height:51.84px"><span style="color:#ffd700">(</span><span style="color:#9cdcfe">module</span><span style="color:#d4d4d4">, </span><span style="color:#9cdcfe">module</span><span style="color:#d4d4d4">.</span><span style="color:#9cdcfe">exports</span><span style="color:#d4d4d4">, </span><span style="color:#dcdcaa">__webpack_require__</span><span style="color:#ffd700">)</span><span style="color:#d4d4d4">;</span></div>
<div class="t mono" style="left:274.4px;top:549.6px;height:51.84px;font-size:34.56px;line-height:51.84px"><span style="color:#c586c0">return</span><span style="color:#d4d4d4"> </span><span style="color:#9cdcfe">module</span><span style="color:#d4d4d4">.</span></div>
<div class="a" style="left:567px;top:563.6px;width:23px;height:23px;border-radius:50%;background:#e51400"></div>
<svg style="left:0;top:0" width="1" height="1"><path d="M606 561.6 H623 L636 575.6 L623 590.6 H606 Z" fill="none" stroke="#ffcc00" stroke-width="4.2" stroke-linejoin="round"/></svg>
<div class="t mono" style="left:648.0px;top:549.6px;height:51.84px;font-size:34.56px;line-height:51.84px"><span style="color:#9cdcfe">exports</span><span style="color:#d4d4d4">;</span></div>
<div class="a" style="left:817px;top:563.6px;width:23px;height:23px;border-radius:50%;background:#7a7a6a"></div>
<div class="t mono" style="left:233.0px;top:860.6px;height:51.84px;font-size:34.56px;line-height:51.84px"><span style="color:#569cd6">var</span><span style="color:#d4d4d4"> </span><span style="color:#729db4">__webpack_exports__</span><span style="color:#d4d4d4"> = </span></div>
<div class="a" style="left:774px;top:874.6px;width:23px;height:23px;border-radius:50%;background:#e51400"></div>
<div class="t mono" style="left:804.4px;top:860.6px;height:51.84px;font-size:34.56px;line-height:51.84px"><span style="color:#dcdcaa">__webpack_require__</span><span style="color:#da70d6">(</span><span style="color:#ce9178">"./src/index.js"</span><span style="color:#da70d6">)</span><span style="color:#d4d4d4">;</span></div>
<div class="a" style="left:190px;top:1097.6px;width:556px;height:34px;background:#424242"></div>
</div>
<div class="a" style="left:1556px;top:164.4px;width:1166px;height:10px;background:linear-gradient(rgba(0,0,0,0.6),rgba(0,0,0,0))"></div>
<div class="a" style="left:1556px;top:164.4px;width:190px;height:1132.6px;overflow:hidden">
<div class="t mono" style="left:0;width:114px;text-align:right;top:-20.6px;height:51.84px;font-size:34.56px;line-height:51.84px;color:#858585">35</div>
<div class="t mono" style="left:0;width:114px;text-align:right;top:31.2px;height:51.84px;font-size:34.56px;line-height:51.84px;color:#858585">36</div>
<div class="t mono" style="left:0;width:114px;text-align:right;top:83.0px;height:51.84px;font-size:34.56px;line-height:51.84px;color:#858585">37</div>
<div class="t mono" style="left:0;width:114px;text-align:right;top:134.9px;height:51.84px;font-size:34.56px;line-height:51.84px;color:#858585">38</div>
<div class="t mono" style="left:0;width:114px;text-align:right;top:186.7px;height:51.84px;font-size:34.56px;line-height:51.84px;color:#858585">39</div>
<div class="t mono" style="left:0;width:114px;text-align:right;top:238.6px;height:51.84px;font-size:34.56px;line-height:51.84px;color:#858585">40</div>
<div class="t mono" style="left:0;width:114px;text-align:right;top:290.4px;height:51.84px;font-size:34.56px;line-height:51.84px;color:#858585">41</div>
<div class="t mono" style="left:0;width:114px;text-align:right;top:342.2px;height:51.84px;font-size:34.56px;line-height:51.84px;color:#858585">42</div>
<div class="t mono" style="left:0;width:114px;text-align:right;top:394.1px;height:51.84px;font-size:34.56px;line-height:51.84px;color:#858585">43</div>
<div class="t mono" style="left:0;width:114px;text-align:right;top:445.9px;height:51.84px;font-size:34.56px;line-height:51.84px;color:#858585">44</div>
<div class="t mono" style="left:0;width:114px;text-align:right;top:497.8px;height:51.84px;font-size:34.56px;line-height:51.84px;color:#858585">45</div>
<div class="t mono" style="left:0;width:114px;text-align:right;top:549.6px;height:51.84px;font-size:34.56px;line-height:51.84px;color:#858585">46</div>
<div class="t mono" style="left:0;width:114px;text-align:right;top:601.4px;height:51.84px;font-size:34.56px;line-height:51.84px;color:#858585">47</div>
<div class="t mono" style="left:0;width:114px;text-align:right;top:653.3px;height:51.84px;font-size:34.56px;line-height:51.84px;color:#858585">48</div>
<div class="t mono" style="left:0;width:114px;text-align:right;top:705.1px;height:51.84px;font-size:34.56px;line-height:51.84px;color:#858585">49</div>
<div class="t mono" style="left:0;width:114px;text-align:right;top:757.0px;height:51.84px;font-size:34.56px;line-height:51.84px;color:#858585">50</div>
<div class="t mono" style="left:0;width:114px;text-align:right;top:808.8px;height:51.84px;font-size:34.56px;line-height:51.84px;color:#858585">51</div>
<div class="t mono" style="left:0;width:114px;text-align:right;top:860.6px;height:51.84px;font-size:34.56px;line-height:51.84px;color:#858585">52</div>
<div class="t mono" style="left:0;width:114px;text-align:right;top:912.5px;height:51.84px;font-size:34.56px;line-height:51.84px;color:#c6c6c6">53</div>
</div>
<div class="a" style="left:1570px;top:572.5px;width:23.5px;height:23.5px;border-radius:50%;background:#e51400"></div>
<div class="a" style="left:1570px;top:1039.0px;width:23.5px;height:23.5px;border-radius:50%;background:#e51400"></div>
<svg style="left:0;top:0" width="1" height="1"><path d="M1568 726.0 H1584 L1598 740.0 L1584 756.0 H1568 Z" fill="none" stroke="#ffcc00" stroke-width="4.2" stroke-linejoin="round"/><circle cx="1581" cy="741.0" r="6" fill="#e51400"/></svg>
<svg style="left:0;top:0" width="1" height="1"><path d="M1568 1086.9 H1583 L1597 1102.9 L1583 1118.9 H1568 Z" fill="none" stroke="#89d185" stroke-width="4.2" stroke-linejoin="round"/></svg>
<div class="a" style="left:2722px;top:164.4px;width:118px;height:1133px;background:#1e1e1e;box-shadow:-6px 0 6px -4px rgba(0,0,0,0.6)"></div>
<svg style="left:0;top:0" width="1" height="1"><g opacity="0.38"><rect x="2730" y="165.5" width="4" height="2.2" fill="#6a9955"/><rect x="2732" y="169.5" width="2" height="2.2" fill="#6a9955"/><rect x="2736" y="169.5" width="20" height="2.2" fill="#6a9955"/><rect x="2758" y="169.5" width="6" height="2.2" fill="#6a9955"/><rect x="2766" y="169.5" width="12" height="2.2" fill="#6a9955"/><rect x="2780" y="169.5" width="14" height="2.2" fill="#6a9955"/><rect x="2796" y="169.5" width="6" height="2.2" fill="#6a9955"/><rect x="2804" y="169.5" width="8" height="2.2" fill="#6a9955"/><rect x="2814" y="169.5" width="8" height="2.2" fill="#6a9955"/><rect x="2824" y="169.5" width="12" height="2.2" fill="#6a9955"/><rect x="2838" y="169.5" width="2" height="2.2" fill="#6a9955"/><rect x="2732" y="173.5" width="2" height="2.2" fill="#6a9955"/><rect x="2736" y="173.5" width="8" height="2.2" fill="#6a9955"/><rect x="2746" y="173.5" width="14" height="2.2" fill="#6a9955"/><rect x="2762" y="173.5" width="4" height="2.2" fill="#6a9955"/><rect x="2768" y="173.5" width="14" height="2.2" fill="#6a9955"/><rect x="2784" y="173.5" width="8" height="2.2" fill="#6a9955"/><rect x="2794" y="173.5" width="6" height="2.2" fill="#6a9955"/><rect x="2802" y="173.5" width="20" height="2.2" fill="#6a9955"/><rect x="2824" y="173.5" width="6" height="2.2" fill="#6a9955"/><rect x="2832" y="173.5" width="6" height="2.2" fill="#6a9955"/><rect x="2732" y="177.5" width="2" height="2.2" fill="#6a9955"/><rect x="2736" y="177.5" width="4" height="2.2" fill="#6a9955"/><rect x="2742" y="177.5" width="8" height="2.2" fill="#6a9955"/><rect x="2752" y="177.5" width="16" height="2.2" fill="#6a9955"/><rect x="2770" y="177.5" width="10" height="2.2" fill="#6a9955"/><rect x="2782" y="177.5" width="4" height="2.2" fill="#6a9955"/><rect x="2788" y="177.5" width="12" height="2.2" fill="#6a9955"/><rect x="2802" y="177.5" width="2" height="2.2" fill="#6a9955"/><rect x="2806" y="177.5" width="16" height="2.2" fill="#6a9955"/><rect x="2824" y="177.5" width="12" height="2.2" fill="#6a9955"/><rect x="2838" y="177.5" width="2" height="2.2" fill="#6a9955"/><rect x="2732" y="181.5" width="2" height="2.2" fill="#6a9955"/><rect x="2736" y="181.5" width="4" height="2.2" fill="#6a9955"/><rect x="2742" y="181.5" width="6" height="2.2" fill="#6a9955"/><rect x="2750" y="181.5" width="6" height="2.2" fill="#6a9955"/><rect x="2758" y="181.5" width="12" height="2.2" fill="#6a9955"/><rect x="2772" y="181.5" width="4" height="2.2" fill="#6a9955"/><rect x="2778" y="181.5" width="8" height="2.2" fill="#6a9955"/><rect x="2788" y="181.5" width="6" height="2.2" fill="#6a9955"/><rect x="2796" y="181.5" width="12" height="2.2" fill="#6a9955"/><rect x="2810" y="181.5" width="10" height="2.2" fill="#6a9955"/><rect x="2822" y="181.5" width="12" height="2.2" fill="#6a9955"/><rect x="2836" y="181.5" width="2" height="2.2" fill="#6a9955"/><rect x="2732" y="185.5" width="2" height="2.2" fill="#6a9955"/><rect x="2736" y="185.5" width="4" height="2.2" fill="#6a9955"/><rect x="2742" y="185.5" width="14" height="2.2" fill="#6a9955"/><rect x="2758" y="185.5" width="6" height="2.2" fill="#6a9955"/><rect x="2766" y="185.5" width="14" height="2.2" fill="#6a9955"/><rect x="2782" y="185.5" width="14" height="2.2" fill="#6a9955"/><rect x="2798" y="185.5" width="8" height="2.2" fill="#6a9955"/><rect x="2808" y="185.5" width="18" height="2.2" fill="#6a9955"/><rect x="2828" y="185.5" width="12" height="2.2" fill="#6a9955"/><rect x="2732" y="189.5" width="2" height="2.2" fill="#6a9955"/><rect x="2736" y="189.5" width="4" height="2.2" fill="#6a9955"/><rect x="2742" y="189.5" width="6" height="2.2" fill="#6a9955"/><rect x="2750" y="189.5" width="6" height="2.2" fill="#6a9955"/><rect x="2758" y="189.5" width="14" height="2.2" fill="#6a9955"/><rect x="2774" y="189.5" width="6" height="2.2" fill="#6a9955"/><rect x="2782" y="189.5" width="32" height="2.2" fill="#6a9955"/><rect x="2816" y="189.5" width="12" height="2.2" fill="#6a9955"/><rect x="2830" y="189.5" width="10" height="2.2" fill="#6a9955"/><rect x="2732" y="193.5" width="4" height="2.2" fill="#6a9955"/><rect x="2730" y="197.5" width="6" height="2.2" fill="#ffd700"/><rect x="2738" y="197.5" width="4" height="2.2" fill="#ffd700"/><rect x="2744" y="197.5" width="2" height="2.2" fill="#d4d4d4"/><rect x="2748" y="197.5" width="4" height="2.2" fill="#6a9955"/><rect x="2754" y="197.5" width="32" height="2.2" fill="#6a9955"/><rect x="2734" y="201.5" width="6" height="2.2" fill="#569cd6"/><rect x="2742" y="201.5" width="38" height="2.2" fill="#9cdcfe"/><rect x="2782" y="201.5" width="2" height="2.2" fill="#d4d4d4"/><rect x="2786" y="201.5" width="4" height="2.2" fill="#d4d4d4"/><rect x="2738" y="209.5" width="24" height="2.2" fill="#ce9178"/><rect x="2762" y="209.5" width="2" height="2.2" fill="#d4d4d4"/><rect x="2766" y="209.5" width="4" height="2.2" fill="#d4d4d4"/><rect x="2770" y="209.5" width="12" height="2.2" fill="#9cdcfe"/><rect x="2782" y="209.5" width="2" height="2.2" fill="#d4d4d4"/><rect x="2786" y="209.5" width="4" height="2.2" fill="#d4d4d4"/><rect x="2792" y="209.5" width="2" height="2.2" fill="#d4d4d4"/><rect x="2742" y="217.5" width="8" height="2.2" fill="#dcdcaa"/><rect x="2750" y="217.5" width="32" height="2.2" fill="#ce9178"/><rect x="2784" y="217.5" width="2" height="2.2" fill="#ce9178"/><rect x="2788" y="217.5" width="24" height="2.2" fill="#ce9178"/><rect x="2814" y="217.5" width="26" height="2.2" fill="#ce9178"/><rect x="2738" y="225.5" width="6" height="2.2" fill="#d4d4d4"/><rect x="2738" y="233.5" width="32" height="2.2" fill="#ce9178"/><rect x="2770" y="233.5" width="2" height="2.2" fill="#d4d4d4"/><rect x="2774" y="233.5" width="4" height="2.2" fill="#d4d4d4"/><rect x="2778" y="233.5" width="48" height="2.2" fill="#9cdcfe"/><rect x="2828" y="233.5" width="12" height="2.2" fill="#9cdcfe"/><rect x="2746" y="241.5" width="8" height="2.2" fill="#dcdcaa"/><rect x="2754" y="241.5" width="14" height="2.2" fill="#ce9178"/><rect x="2770" y="241.5" width="6" height="2.2" fill="#ce9178"/><rect x="2778" y="241.5" width="2" height="2.2" fill="#ce9178"/><rect x="2782" y="241.5" width="46" height="2.2" fill="#ce9178"/><rect x="2830" y="241.5" width="10" height="2.2" fill="#ce9178"/><rect x="2742" y="249.5" width="4" height="2.2" fill="#d4d4d4"/><rect x="2734" y="257.5" width="6" height="2.2" fill="#d4d4d4"/><rect x="2734" y="261.5" width="4" height="2.2" fill="#6a9955"/><rect x="2740" y="261.5" width="6" height="2.2" fill="#6a9955"/><rect x="2748" y="261.5" width="12" height="2.2" fill="#6a9955"/><rect x="2762" y="261.5" width="10" height="2.2" fill="#6a9955"/><rect x="2734" y="265.5" width="6" height="2.2" fill="#569cd6"/><rect x="2742" y="265.5" width="48" height="2.2" fill="#9cdcfe"/><rect x="2792" y="265.5" width="2" height="2.2" fill="#d4d4d4"/><rect x="2796" y="265.5" width="6" height="2.2" fill="#d4d4d4"/><rect x="2734" y="273.5" width="4" height="2.2" fill="#6a9955"/><rect x="2740" y="273.5" width="6" height="2.2" fill="#6a9955"/><rect x="2748" y="273.5" width="14" height="2.2" fill="#6a9955"/><rect x="2764" y="273.5" width="16" height="2.2" fill="#6a9955"/><rect x="2734" y="277.5" width="16" height="2.2" fill="#569cd6"/><rect x="2752" y="277.5" width="38" height="2.2" fill="#dcdcaa"/><rect x="2790" y="277.5" width="20" height="2.2" fill="#9cdcfe"/><rect x="2812" y="277.5" width="2" height="2.2" fill="#d4d4d4"/><rect x="2738" y="281.5" width="4" height="2.2" fill="#6a9955"/><rect x="2744" y="281.5" width="10" height="2.2" fill="#6a9955"/><rect x="2756" y="281.5" width="4" height="2.2" fill="#6a9955"/><rect x="2762" y="281.5" width="12" height="2.2" fill="#6a9955"/><rect x="2776" y="281.5" width="4" height="2.2" fill="#6a9955"/><rect x="2782" y="281.5" width="4" height="2.2" fill="#6a9955"/><rect x="2788" y="281.5" width="10" height="2.2" fill="#6a9955"/><rect x="2738" y="285.5" width="6" height="2.2" fill="#569cd6"/><rect x="2746" y="285.5" width="24" height="2.2" fill="#9cdcfe"/><rect x="2772" y="285.5" width="2" height="2.2" fill="#9cdcfe"/><rect x="2776" y="285.5" width="64" height="2.2" fill="#9cdcfe"/><rect x="2738" y="289.5" width="4" height="2.2" fill="#c586c0"/><rect x="2744" y="289.5" width="26" height="2.2" fill="#9cdcfe"/><rect x="2772" y="289.5" width="6" height="2.2" fill="#9cdcfe"/><rect x="2780" y="289.5" width="18" height="2.2" fill="#569cd6"/><rect x="2798" y="289.5" width="2" height="2.2" fill="#d4d4d4"/><rect x="2802" y="289.5" width="2" height="2.2" fill="#d4d4d4"/><rect x="2742" y="293.5" width="12" height="2.2" fill="#c586c0"/><rect x="2756" y="293.5" width="42" height="2.2" fill="#9cdcfe"/><rect x="2738" y="297.5" width="2" height="2.2" fill="#d4d4d4"/><rect x="2738" y="301.5" width="4" height="2.2" fill="#6a9955"/><rect x="2744" y="301.5" width="12" height="2.2" fill="#6a9955"/><rect x="2758" y="301.5" width="2" height="2.2" fill="#6a9955"/><rect x="2762" y="301.5" width="6" height="2.2" fill="#6a9955"/><rect x="2770" y="301.5" width="12" height="2.2" fill="#6a9955"/><rect x="2784" y="301.5" width="8" height="2.2" fill="#6a9955"/><rect x="2794" y="301.5" width="6" height="2.2" fill="#6a9955"/><rect x="2802" y="301.5" width="4" height="2.2" fill="#6a9955"/><rect x="2808" y="301.5" width="8" height="2.2" fill="#6a9955"/><rect x="2818" y="301.5" width="6" height="2.2" fill="#6a9955"/><rect x="2826" y="301.5" width="12" height="2.2" fill="#6a9955"/><rect x="2738" y="305.5" width="6" height="2.2" fill="#569cd6"/><rect x="2746" y="305.5" width="12" height="2.2" fill="#9cdcfe"/><rect x="2760" y="305.5" width="2" height="2.2" fill="#9cdcfe"/><rect x="2764" y="305.5" width="68" height="2.2" fill="#9cdcfe"/><rect x="2834" y="305.5" width="2" height="2.2" fill="#9cdcfe"/><rect x="2838" y="305.5" width="2" height="2.2" fill="#9cdcfe"/><rect x="2742" y="309.5" width="4" height="2.2" fill="#6a9955"/><rect x="2748" y="309.5" width="4" height="2.2" fill="#6a9955"/><rect x="2754" y="309.5" width="18" height="2.2" fill="#6a9955"/><rect x="2774" y="309.5" width="12" height="2.2" fill="#6a9955"/><rect x="2742" y="313.5" width="4" height="2.2" fill="#6a9955"/><rect x="2748" y="313.5" width="4" height="2.2" fill="#6a9955"/><rect x="2754" y="313.5" width="26" height="2.2" fill="#6a9955"/><rect x="2782" y="313.5" width="12" height="2.2" fill="#6a9955"/><rect x="2742" y="317.5" width="16" height="2.2" fill="#9cdcfe"/><rect x="2760" y="317.5" width="4" height="2.2" fill="#9cdcfe"/><rect x="2738" y="321.5" width="4" height="2.2" fill="#d4d4d4"/><rect x="2738" y="329.5" width="4" height="2.2" fill="#6a9955"/><rect x="2744" y="329.5" width="14" height="2.2" fill="#6a9955"/><rect x="2760" y="329.5" width="6" height="2.2" fill="#6a9955"/><rect x="2768" y="329.5" width="12" height="2.2" fill="#6a9955"/><rect x="2782" y="329.5" width="16" height="2.2" fill="#6a9955"/><rect x="2738" y="333.5" width="74" height="2.2" fill="#9cdcfe"/><rect x="2814" y="333.5" width="26" height="2.2" fill="#9cdcfe"/><rect x="2738" y="341.5" width="4" height="2.2" fill="#6a9955"/><rect x="2744" y="341.5" width="12" height="2.2" fill="#6a9955"/><rect x="2758" y="341.5" width="6" height="2.2" fill="#6a9955"/><rect x="2766" y="341.5" width="14" height="2.2" fill="#6a9955"/><rect x="2782" y="341.5" width="4" height="2.2" fill="#6a9955"/><rect x="2788" y="341.5" width="6" height="2.2" fill="#6a9955"/><rect x="2796" y="341.5" width="12" height="2.2" fill="#6a9955"/><rect x="2738" y="345.5" width="12" height="2.2" fill="#c586c0"/><rect x="2752" y="345.5" width="30" height="2.2" fill="#9cdcfe"/><rect x="2734" y="349.5" width="2" height="2.2" fill="#d4d4d4"/><rect x="2734" y="357.5" width="4" height="2.2" fill="#6a9955"/><rect x="2740" y="357.5" width="14" height="2.2" fill="#6a9955"/><rect x="2734" y="361.5" width="4" height="2.2" fill="#6a9955"/><rect x="2740" y="361.5" width="8" height="2.2" fill="#6a9955"/><rect x="2750" y="361.5" width="10" height="2.2" fill="#6a9955"/><rect x="2762" y="361.5" width="12" height="2.2" fill="#6a9955"/><rect x="2776" y="361.5" width="6" height="2.2" fill="#6a9955"/><rect x="2784" y="361.5" width="12" height="2.2" fill="#6a9955"/><rect x="2798" y="361.5" width="14" height="2.2" fill="#6a9955"/><rect x="2734" y="365.5" width="4" height="2.2" fill="#6a9955"/><rect x="2740" y="365.5" width="8" height="2.2" fill="#6a9955"/><rect x="2750" y="365.5" width="10" height="2.2" fill="#6a9955"/><rect x="2762" y="365.5" width="12" height="2.2" fill="#6a9955"/><rect x="2776" y="365.5" width="10" height="2.2" fill="#6a9955"/><rect x="2788" y="365.5" width="4" height="2.2" fill="#6a9955"/><rect x="2794" y="365.5" width="14" height="2.2" fill="#6a9955"/><rect x="2810" y="365.5" width="14" height="2.2" fill="#6a9955"/><rect x="2826" y="365.5" width="6" height="2.2" fill="#6a9955"/><rect x="2834" y="365.5" width="6" height="2.2" fill="#6a9955"/><rect x="2734" y="369.5" width="6" height="2.2" fill="#569cd6"/><rect x="2742" y="369.5" width="38" height="2.2" fill="#9cdcfe"/><rect x="2782" y="369.5" width="2" height="2.2" fill="#9cdcfe"/><rect x="2786" y="369.5" width="38" height="2.2" fill="#dcdcaa"/><rect x="2824" y="369.5" width="16" height="2.2" fill="#ce9178"/><rect x="2730" y="373.5" width="10" height="2.2" fill="#da70d6"/></g><rect x="2730" y="372.5" width="110" height="3.5" fill="#264f78" opacity="0.7"/></svg>
<div class="a" style="left:2840px;top:164.4px;width:2px;height:1133px;background:#2a2a2a"></div>
<div class="a" style="left:2842px;top:691.5px;width:38px;height:334px;background:#424242"></div>
<div class="a" style="left:2842px;top:853px;width:38px;height:15px;background:#6e6a3a"></div>
<div class="a" style="left:2842px;top:960px;width:38px;height:15px;background:#5a6b5a"></div>
<div class="a" style="left:2852px;top:960px;width:14px;height:15px;background:#9aa89a"></div>
<div class="a" style="left:1556px;top:1297px;width:1324px;height:440px;background:#1e1e1e"></div>
<div class="a" style="left:1556px;top:1296px;width:1324px;height:3px;background:#414141"></div>
<div class="t" style="left:1620px;top:1318px;height:64px;font-size:31px;line-height:64px;color:#999999">问题</div>
<div class="t" style="left:1752px;top:1318px;height:64px;font-size:31px;line-height:64px;color:#999999">输出</div>
<div class="t" style="left:1885px;top:1318px;height:64px;font-size:31px;line-height:64px;color:#999999">调试控制台</div>
<div class="t" style="left:2111px;top:1318px;height:64px;font-size:31px;line-height:64px;color:#e7e7e7">终端</div>
<div class="a" style="left:2106px;top:1393px;width:74px;height:3px;background:#e7e7e7"></div>
<svg style="left:0;top:0" width="1" height="1"><g fill="none" stroke="#c5c5c5" stroke-width="3.6"><path d="M2625 1329 V1367 M2607 1348 H2644"/><path d="M2663 1344 L2672.5 1354 L2682 1344"/><path d="M2726 1355 L2739 1342 L2752 1355"/><path d="M2802 1337 L2826 1361 M2826 1337 L2802 1361"/></g></svg>
<div class="a" style="left:1612.0px;top:1438.2px;width:200.2px;height:48.6px;background:#2472c8"></div>
<svg style="left:0;top:0" width="1" height="1"><path d="M1812.2 1438.2 L1833.0 1462.5 L1812.2 1486.8 Z" fill="#2472c8"/></svg>
<div class="a" style="left:1833.0px;top:1438.2px;width:340.6px;height:48.6px;background:#e5e510"></div>
<svg style="left:0;top:0" width="1" height="1"><path d="M1812.2 1438.2 H1833 V1486.8 H1812.2 L1833 1462.5 Z" fill="#e5e510"/></svg>
<svg style="left:0;top:0" width="1" height="1"><path d="M2173.6 1438.2 L2193.5 1462.5 L2173.6 1486.8 Z" fill="#e5e510"/></svg>
<div class="a" style="left:2213.4px;top:1438.2px;width:260.6px;height:48.6px;background:#e5e510"></div>
<div class="t mono" style="left:1612.0px;top:1438.2px;height:48.6px;font-size:33.4px;line-height:48.6px;color:#000000;"><span style="letter-spacing:0">t</span><span style="letter-spacing:9.5px;font-size:31px">下的源码</span></div>
<div class="a" style="left:1854px;top:1450.2px;width:17px;height:28px;border:3px solid #000"></div>
<div class="a" style="left:1913px;top:1450.2px;width:17px;height:28px;border:3px solid #000"></div>
<div class="t mono" style="left:1952.0px;top:1438.2px;height:48.6px;font-size:33.4px;line-height:48.6px;color:#000000;">master</div>
<div class="a" style="left:2094px;top:1450.2px;width:17px;height:28px;border:3px solid #000"></div>
<div class="t mono" style="left:2131.0px;top:1438.2px;height:48.6px;font-size:33.4px;line-height:48.6px;color:#000000;">?</div>
<div class="a" style="left:1612.0px;top:1486.8px;width:461.0px;height:48.6px;background:#e5e510"></div>
<div class="a" style="left:2093.0px;top:1486.8px;width:80.5px;height:48.6px;background:#000000"></div>
<svg style="left:0;top:0" width="1" height="1"><path d="M2093.0 1486.8 L2073.0 1511.1 L2093.0 1535.4 Z" fill="#000000"/></svg>
<div class="a" style="left:2173.5px;top:1486.8px;width:220.5px;height:48.6px;background:#e5e5e5"></div>
<svg style="left:0;top:0" width="1" height="1"><path d="M2173.5 1486.8 L2153.0 1511.1 L2173.5 1535.4 Z" fill="#e5e5e5"/></svg>
<div class="a" style="left:2394.0px;top:1486.8px;width:80.0px;height:48.6px;background:#11a8cd"></div>
<svg style="left:0;top:0" width="1" height="1"><path d="M2394.0 1486.8 L2374.0 1511.1 L2394.0 1535.4 Z" fill="#11a8cd"/></svg>
<div class="a" style="left:2114px;top:1498.8px;width:18px;height:28px;border:3px solid #23d18b"></div>
<div class="t mono" style="left:2192.0px;top:1486.8px;height:48.6px;font-size:33.4px;line-height:48.6px;color:#000000;">23:23</div>
<div class="a" style="left:2314px;top:1498.8px;width:18px;height:28px;border:3px solid #000"></div>
<div class="t mono" style="left:2413.0px;top:1486.8px;height:48.6px;font-size:33.4px;line-height:48.6px;color:#000000;">192</div>
<div class="a" style="left:1612.0px;top:1535.4px;width:200.2px;height:48.6px;background:#11a8cd"></div>
<div class="t mono" style="left:1612.0px;top:1535.4px;height:48.6px;font-size:33.4px;line-height:48.6px;color:#000000;">.168.1.5</div>
<div class="a" style="left:1794px;top:1547.4px;width:17px;height:28px;border:3px solid #000"></div>
<svg style="left:0;top:0" width="1" height="1"><path d="M1623 1588.0 V1608.0 Q1623 1614.0 1629 1614.0 H1632" fill="none" stroke="#29b8db" stroke-width="3"/></svg>
<div class="t mono" style="left:1632.0px;top:1584.0px;height:48.6px;font-size:33.4px;line-height:48.6px;color:#cccccc;"><span style="color:#29b8db">&gt;</span><span style="color:#6aa9b0">&gt;</span><span style="color:#8f8f6a">&gt;</span> <span style="color:#23d18b">node</span> <span style="color:#cccccc">main.js</span></div>
<div class="a" style="left:1812px;top:1628.0px;width:141px;height:2px;background:#9a9a9a"></div>
<div class="t mono" style="left:1612.0px;top:1632.6px;height:48.6px;font-size:33.4px;line-height:48.6px;color:#cccccc;">Debugger attached.</div>
<div class="a" style="left:1612px;top:1679.2px;width:21px;height:49px;border:3px solid #cccccc"></div>
<div class="a" style="left:2534px;top:1396px;width:3px;height:340px;background:#3a3a3a"></div>
<svg style="left:0;top:0" width="1" height="1"><g fill="none" stroke="#c5c5c5" stroke-width="3"><rect x="2570" y="1405.0" width="39" height="39" rx="3"/><path d="M2583 1416.0 L2593 1424.5 L2583 1433.0"/></g></svg>
<div class="t" style="left:2622px;top:1396.0px;height:63px;font-size:37.44px;line-height:63px;color:#cccccc">zsh</div>
<svg style="left:0;top:0" width="1" height="1"><g fill="none" stroke="#c5c5c5" stroke-width="3"><rect x="2570" y="1468.4" width="39" height="39" rx="3"/><path d="M2583 1479.4 L2593 1487.9 L2583 1496.4"/></g></svg>
<div class="t" style="left:2622px;top:1459.4px;height:63px;font-size:37.44px;line-height:63px;color:#cccccc">zsh</div>
<svg style="left:0;top:0" width="1" height="1"><g fill="none" stroke="#c5c5c5" stroke-width="3"><rect x="2570" y="1531.7" width="39" height="39" rx="3"/><path d="M2583 1542.7 L2593 1551.2 L2583 1559.7"/></g></svg>
<div class="t" style="left:2622px;top:1522.7px;height:63px;font-size:37.44px;line-height:63px;color:#cccccc">zsh</div>
<div class="a" style="left:2537px;top:1586px;width:343px;height:63px;background:#37373d"></div>
<svg style="left:0;top:0" width="1" height="1"><path transform="translate(2588.7 1617) scale(1.12)" d="M-7 -9 V-12 A7 7 0 0 1 7 -12 V-9 M-12 -9 H12 M-12 -9 C-15 0 -13 10 -7 14 Q0 19 7 14 C13 10 15 0 12 -9 M-16 -14 L-12 -9 M16 -14 L12 -9 M-20 2.6 H-13.5 M20 2.6 H13.5 M-15.7 18 L-10 12.6 M15.7 18 L10 12.6 M-6 -2 L6 10 M6 -2 L-6 10" fill="none" stroke="#c5c5c5" stroke-width="2.68" stroke-linecap="butt" stroke-linejoin="round"/></svg>
<div class="t" style="left:2622px;top:1586px;height:63px;font-size:37.44px;line-height:63px;color:#cccccc">JavaScript ...</div>
<div class="a" style="left:0;top:1736.5px;width:2880px;height:64px;background:#cc6633"></div>
<div class="a" style="left:0;top:1736.5px;width:98px;height:64px;background:#16825d"></div>
<svg style="left:0;top:0" width="1" height="1"><g fill="none" stroke="#ffffff" stroke-width="3.4"><path d="M37 1759 L47 1769 L37 1779"/><path d="M60 1751 L50 1761 L60 1771"/></g></svg>
<svg style="left:0;top:0" width="1" height="1"><g fill="none" stroke="#ffffff" stroke-width="3.4"><circle cx="132" cy="1753" r="5.5"/><circle cx="132" cy="1782" r="5.5"/><circle cx="150" cy="1761" r="5.5"/><path d="M132 1759 V1776 M150 1767 Q150 1774 136 1777"/></g></svg>
<div class="t" style="left:171px;top:1736.5px;height:64px;font-size:34.56px;line-height:64px;color:#ffffff;">master*</div>
<svg style="left:0;top:0" width="1" height="1"><g fill="none" stroke="#ffffff" stroke-width="3.4" stroke-linecap="round"><path d="M352 1778 H349 Q341 1778 341 1770 Q341 1762 350 1762 Q353 1752 362 1752 Q373 1752 374 1763 Q377 1765 377 1770 Q377 1778 369 1778 H366"/><path d="M359 1784 V1766 M352 1772 L359 1765 L366 1772"/></g></svg>
<svg style="left:0;top:0" width="1" height="1"><g fill="none" stroke="#ffffff" stroke-width="3.4"><circle cx="444.5" cy="1768" r="16.5"/><path d="M437 1760.5 L452 1775.5 M452 1760.5 L437 1775.5"/><path d="M523.5 1751 L541 1784 H506 Z" stroke-linejoin="round"/><path d="M523.5 1763 V1773"/></g><circle cx="523.5" cy="1778.5" r="2" fill="#fff"/></svg>
<div class="t" style="left:474px;top:1736.5px;height:64px;font-size:34.56px;line-height:64px;color:#ffffff;">0</div>
<div class="t" style="left:553px;top:1736.5px;height:64px;font-size:34.56px;line-height:64px;color:#ffffff;">0</div>
<svg style="left:0;top:0" width="1" height="1"><path d="M634.5 1769 V1758 L656 1768.8 L638 1778" fill="none" stroke="#ffffff" stroke-width="3.2"/></svg>
<svg style="left:0;top:0" width="1" height="1"><path transform="translate(629.5 1778) scale(0.5)" d="M-7 -9 V-12 A7 7 0 0 1 7 -12 V-9 M-12 -9 H12 M-12 -9 C-15 0 -13 10 -7 14 Q0 19 7 14 C13 10 15 0 12 -9 M-16 -14 L-12 -9 M16 -14 L12 -9 M-20 2.6 H-13.5 M20 2.6 H13.5 M-15.7 18 L-10 12.6 M15.7 18 L10 12.6" fill="none" stroke="#ffffff" stroke-width="5.60" stroke-linecap="butt" stroke-linejoin="round"/></svg>
<div class="t" style="left:706px;top:1736.5px;height:64px;font-size:34.56px;line-height:64px;color:#ffffff;">{..} : Scanning..</div>
<svg style="left:0;top:0" width="1" height="1"><g fill="none" stroke="#ffffff" stroke-width="3"><circle cx="1014.5" cy="1768" r="15"/><ellipse cx="1014.5" cy="1768" rx="7" ry="15"/><path d="M999.5 1768 H1029.5 M1002 1760 H1027 M1002 1776 H1027"/></g></svg>
<div class="t" style="left:1043px;top:1736.5px;height:64px;font-size:34.56px;line-height:64px;color:#ffffff;">Chinese (Simplified)</div>
<svg style="left:0;top:0" width="1" height="1"><g fill="none" stroke="#ffffff" stroke-width="3.4" stroke-linejoin="round"><path d="M1415 1754 L1428 1761.5 V1776.5 L1415 1784 L1402 1776.5 V1761.5 Z"/><path d="M1410 1763 L1420 1769 L1410 1775 Z"/></g></svg>
<div class="t" style="left:1440px;top:1736.5px;height:64px;font-size:34.56px;line-height:64px;color:#ffffff;">tabnine</div>
<div class="t" style="left:1678px;top:1736.5px;height:64px;font-size:34.56px;line-height:64px;color:#ffffff;">行 53，列 3</div>
<div class="t" style="left:1909px;top:1736.5px;height:64px;font-size:34.56px;line-height:64px;color:#ffffff;">空格: 2</div>
<div class="t" style="left:2061px;top:1736.5px;height:64px;font-size:34.56px;line-height:64px;color:#ffffff;">UTF-8</div>
<div class="t" style="left:2208px;top:1736.5px;height:64px;font-size:34.56px;line-height:64px;color:#ffffff;">LF</div>
<div class="t" style="left:2291px;top:1736.5px;height:64px;font-size:34.56px;line-height:64px;color:#ffffff;">JavaScript</div>
<svg style="left:0;top:0" width="1" height="1"><g fill="none" stroke="#ffffff" stroke-width="3.2" stroke-linecap="round"><path d="M2508 1778 A14 14 0 1 1 2530 1778"/><path d="M2513 1773 A8 8 0 1 1 2525 1773"/><circle cx="2519" cy="1766" r="2.5"/><path d="M2519 1771 V1787"/></g></svg>
<div class="t" style="left:2549px;top:1736.5px;height:64px;font-size:34.56px;line-height:64px;color:#ffffff;">Go Live</div>
<svg style="left:0;top:0" width="1" height="1"><g fill="none" stroke="#ffffff" stroke-width="3.2" stroke-linecap="round"><circle cx="2724" cy="1765" r="8"/><path d="M2713 1786 Q2713 1774 2724 1774 Q2735 1774 2735 1786"/><path d="M2730 1752 H2747 V1767 H2740 L2735 1772"/></g></svg>
<svg style="left:0;top:0" width="1" height="1"><g fill="none" stroke="#ffffff" stroke-width="3.2" stroke-linejoin="round"><path d="M2803 1779 Q2808 1775 2808 1768 V1764 Q2808 1752 2816 1752 Q2824 1752 2824 1764 V1768 Q2824 1775 2829 1779 Z"/><path d="M2812 1783 Q2816 1787 2820 1783"/></g></svg>
<div class="a" style="left:135px;top:828px;width:1471px;height:768px;border:8px solid #e0392f;border-radius:5px"></div>
<div class="a" style="left:245px;top:1025px;width:284px;height:80px;border:7px solid #e0392f;border-radius:4px"></div>
<svg style="left:0;top:0" width="1" height="1"><g stroke="#e0392f" stroke-width="8" stroke-linecap="round" stroke-linejoin="round" fill="none"><path d="M218 1261 L215 975"/><path d="M204.5 983.5 L215 966.5 L225.5 983.5"/><path d="M1621 1453 L1462 1272"/><path d="M1478 1272 L1456 1265 L1461 1287"/></g></svg>
<script>(function(){try{if(window.innerWidth>1000&&Math.abs(window.innerWidth-2880)>8){var z=window.innerWidth/2880;var b=document.body;b.style.transformOrigin="0 0";b.style.transform="scale("+z+")";}}catch(e){}})();</script>
</body></html>
